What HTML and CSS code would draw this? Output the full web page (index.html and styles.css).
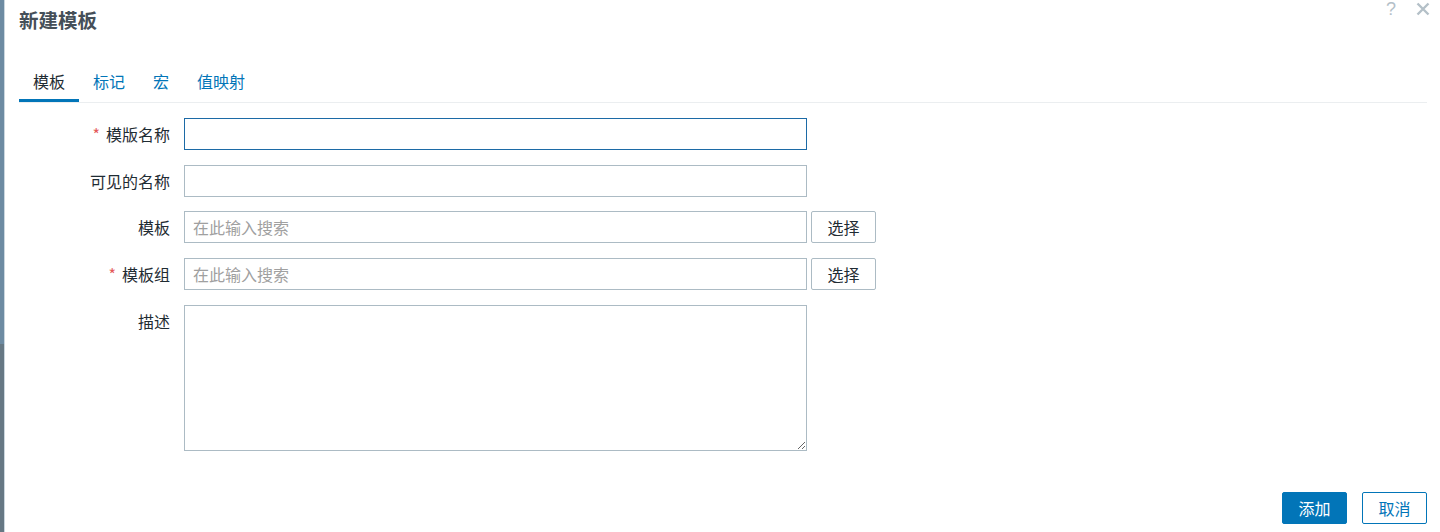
FILE: index.html
```html
<!DOCTYPE html>
<html lang="zh">
<head>
<meta charset="utf-8">
<title>新建模板</title>
<link rel="stylesheet" href="styles.css">
</head>
<body>
<div class="page">
  <div class="strip"></div>
  <div class="dialog">
    <div class="header">
      <h1 class="title">新建模板</h1>
      <div class="controls">
        <span class="help">?</span>
        <svg class="close" width="14" height="14" viewBox="0 0 14 14"><path d="M1.5 1.5 L12.5 12.5 M12.5 1.5 L1.5 12.5" stroke="#b4c0c8" stroke-width="2.4" fill="none"/></svg>
      </div>
    </div>
    <ul class="tabs">
      <li class="tab active">模板</li>
      <li class="tab">标记</li>
      <li class="tab">宏</li>
      <li class="tab">值映射</li>
    </ul>
    <div class="form">
      <label class="label"><span class="req">*</span>模版名称</label>
      <div class="field"><input class="input focused" type="text"></div>

      <label class="label">可见的名称</label>
      <div class="field"><input class="input" type="text"></div>

      <label class="label">模板</label>
      <div class="field"><input class="input" type="text" placeholder="在此输入搜索"><button class="btn-alt">选择</button></div>

      <label class="label"><span class="req">*</span>模板组</label>
      <div class="field"><input class="input" type="text" placeholder="在此输入搜索"><button class="btn-alt">选择</button></div>

      <label class="label">描述</label>
      <div class="field"><textarea class="textarea"></textarea></div>
    </div>
    <div class="footer">
      <button class="btn-primary">添加</button>
      <button class="btn-secondary">取消</button>
    </div>
  </div>
</div>
</body>
</html>
```

FILE: styles.css
```css
* { box-sizing: border-box; }
html, body { margin: 0; padding: 0; background: #fff; }
body {
  font-family: "Noto Sans CJK SC", "Noto Sans", "Liberation Sans", sans-serif;
  color: #1f2c33;
}
.page {
  display: flex;
  height: 532px;
  overflow: hidden;
}
.strip {
  width: 5px;
  flex: none;
  background: linear-gradient(to bottom, #6d8ba2 0, #6d8ba2 344px, #667884 344px, #667884 100%);
  border-right: 1px solid #cbd7df;
}
.dialog {
  flex: 1;
  display: flex;
  flex-direction: column;
  padding: 0 13px 8px 14px;
}
.header {
  height: 64px;
  display: flex;
  justify-content: space-between;
  align-items: flex-start;
}
.title {
  margin: 0;
  padding-top: 7px;
  font-size: 19.5px;
  line-height: 26px;
  font-weight: bold;
  color: #454f58;
}
.controls {
  display: flex;
  align-items: center;
  gap: 20px;
  padding-top: 1px;
}
.help {
  font-size: 18px;
  line-height: 16px;
  color: #b4c0c8;
  font-family: "Liberation Sans", sans-serif;
}
.close { display: block; margin-right: -3px; }
.tabs {
  list-style: none;
  margin: 0;
  padding: 0;
  display: flex;
  border-bottom: 1px solid #ebeef0;
}
.tab {
  height: 38px;
  padding: 0 14px 3px;
  font-size: 16px;
  line-height: 35px;
  color: #0275b8;
  border-bottom: 3px solid transparent;
}
.tab.active {
  color: #1f2c33;
  border-bottom-color: #0275b8;
}
.form {
  margin-top: 15px;
  display: grid;
  grid-template-columns: 151px auto;
  column-gap: 14px;
  row-gap: 14.67px;
  justify-content: start;
}
.label {
  text-align: right;
  font-size: 16px;
  line-height: 32px;
  color: #1f2c33;
}
.req {
  color: #e45959;
  margin-right: 6px;
}
.field {
  display: flex;
  gap: 4px;
}
.input {
  width: 623px;
  height: 32px;
  border: 1px solid #acbbc4;
  border-radius: 0;
  padding: 0 8px;
  font-family: inherit;
  font-size: 16px;
  color: #1f2c33;
  outline: none;
  background: #fff;
}
.input.focused { border-color: #1c6aa6; }
.input::placeholder { color: #a0a0a0; }
.btn-alt {
  width: 65px;
  height: 32px;
  border: 1px solid #acbbc4;
  border-radius: 2px;
  background: #fff;
  font-family: inherit;
  font-size: 16px;
  color: #1f2c33;
  padding: 0;
}
.textarea {
  width: 623px;
  height: 146px;
  border: 1px solid #acbbc4;
  border-radius: 0;
  padding: 4px 8px;
  font-family: inherit;
  font-size: 16px;
  resize: both;
  outline: none;
}
.footer {
  margin-top: auto;
  display: flex;
  justify-content: flex-end;
  gap: 15px;
}
.btn-primary, .btn-secondary {
  width: 65px;
  height: 32px;
  border-radius: 2px;
  font-family: inherit;
  font-size: 16px;
  padding: 0;
}
.btn-primary {
  background: #0275b8;
  border: 1px solid #0275b8;
  color: #fff;
}
.btn-secondary {
  background: #fff;
  border: 1px solid #0275b8;
  color: #0275b8;
}
```
